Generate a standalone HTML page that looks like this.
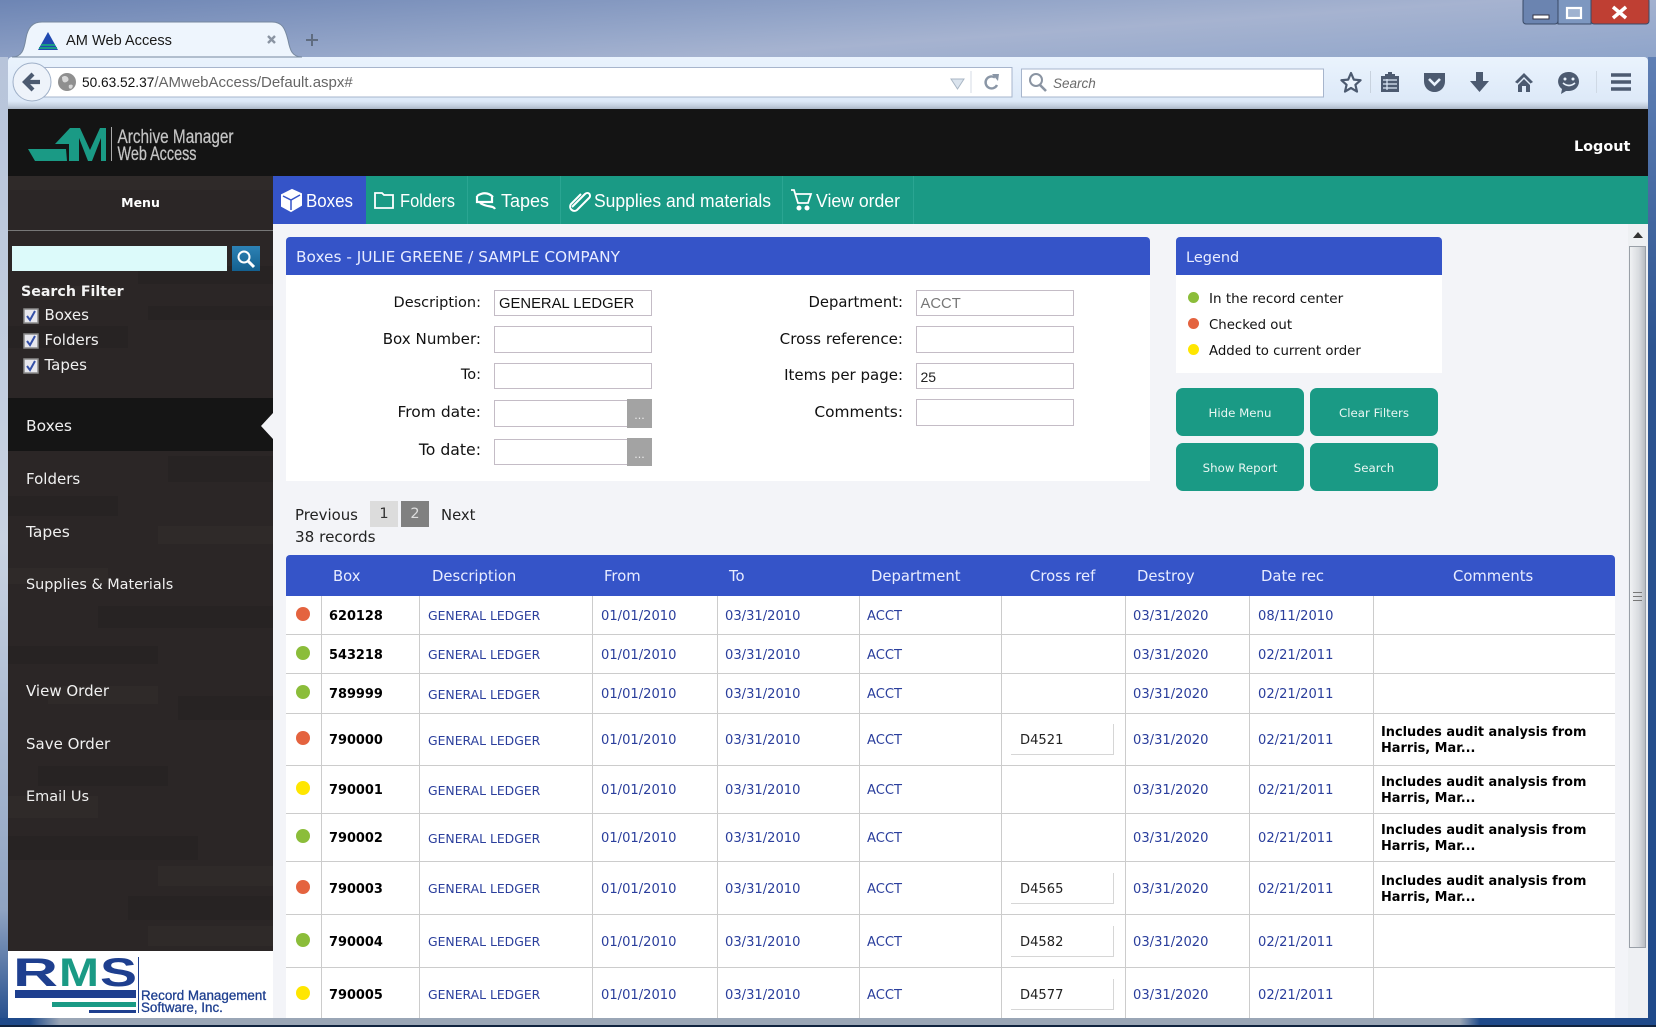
<!DOCTYPE html>
<html><head><meta charset="utf-8"><title>AM Web Access</title>
<style>
html,body{margin:0;padding:0;background:#a9b6d3}
body{width:1656px;height:1027px;overflow:hidden;position:relative;font-family:"DejaVu Sans","Liberation Sans",sans-serif;}
.a{position:absolute}
.t{position:absolute;white-space:nowrap;line-height:20px;height:20px}
.lab{position:absolute;white-space:nowrap;line-height:20px;height:20px;text-align:right;font-size:15.100px;color:#111}
.in{position:absolute;background:#fff;border:1px solid #c4bcc6;box-sizing:border-box;width:158px}
.inv{font-family:"Liberation Sans",sans-serif;font-size:14.800px;position:absolute;white-space:nowrap;line-height:20px}
.dots{position:absolute;background:#a3a3a3;color:#eee;width:25px;text-align:center;font-size:11px;line-height:34px;height:29px}
.sb{color:#f0f0f0;font-size:15px}
.btn{position:absolute;background:#1a9a85;border-radius:7px;color:#e8f6f2;font-size:11.800px;text-align:center;width:128px;height:48px;line-height:50px}
.dot{position:absolute;width:14px;height:14px;border-radius:50%}
.r{background:#e4633f}.g{background:#8bbd3a}.y{background:#ffe600}
.h{position:absolute;top:567px;line-height:20px;font-size:14.800px;color:#e8ecff;white-space:nowrap}
table{border-collapse:separate;border-spacing:0;table-layout:fixed;width:1329px;background:#fff}
td{box-sizing:border-box;border-right:1px solid #ccc;border-bottom:1px solid #ccc;padding:2px 0 0 7px;font-size:13.100px;color:#2a3e9c;white-space:nowrap;vertical-align:middle}
td.b{font-weight:bold;color:#000;font-size:12.900px}
td.c{font-weight:bold;color:#000;font-size:12.900px;line-height:16px;border-right:0;padding-top:3px}
td.d{font-size:12.400px;padding:1px 0 0 8px}
td.x{padding:0}
.xr{margin-left:9px;width:103px;height:31px;box-sizing:border-box;border-right:1px solid #d6d6d6;border-bottom:1px solid #d6d6d6;line-height:34px;padding-left:9px;color:#222}
</style></head><body>

<!-- window frame -->
<div class="a" style="left:0;top:0;width:1656px;height:60px;background:linear-gradient(176deg,#6d85b4 0%,#97a8ca 45%,#a6b3d0 60%,#8ea4ca 100%)"></div>
<div class="a" style="left:0;top:57px;width:8px;height:970px;background:linear-gradient(180deg,#b7c4da 0%,#c9d3e2 50%,#8fa3c2 88%,#1f4a8a 100%)"></div>
<div class="a" style="left:1648px;top:57px;width:8px;height:970px;background:linear-gradient(180deg,#5f7fb4 0%,#2d5490 30%,#1f4a8a 100%)"></div>
<div class="a" style="left:0;top:1018px;width:1656px;height:9px;background:linear-gradient(90deg,#1f4a8a 0,#1f4a8a 30px,#9aa6b6 60px,#9aa6b6 1460px,#1f4a8a 1480px)"></div>
<div class="a" style="left:0;top:1025px;width:1656px;height:2px;background:#10233f"></div>

<!-- toolbar -->
<div class="a" style="left:8px;top:57px;width:1640px;height:52px;background:linear-gradient(180deg,#eaf3fd 0%,#dde9f8 85%,#c3cfde 94%,#aab6c6 100%);border-radius:4px 4px 0 0"></div>

<svg class="a" style="left:0;top:0" width="1656" height="109" viewBox="0 0 1656 109">
 <!-- tab -->
 <path d="M12 57C22 57 24 50 26 38C28 27 33 22 42 22H272C282 22 285 28 288 40C290 50 292 57 302 57Z" fill="#eef5fd" stroke="#76889f"/>
 <path d="M38 50L48 32L58 50Z" fill="#1f49b0"/><path d="M41 45H55M39 48H57" stroke="#1a9a85" stroke-width="2"/>
 <text x="66" y="45" font-family="Liberation Sans" font-size="14.600" fill="#1a1a1a">AM Web Access</text>
 <path d="M268 36L275 43M275 36L268 43" stroke="#8a94a2" stroke-width="2.400"/>
 <path d="M312 34V46M306 40H318" stroke="#5f6c80" stroke-width="2"/>
 <!-- url bar -->
 <rect x="40" y="67.500" width="972" height="29.500" fill="#fff" stroke="#a7b5cc"/>
 <circle cx="32" cy="82" r="19" fill="#eef3fa" stroke="#9fb0c8"/>
 <path d="M40 82H27M33 74L25 82L33 90" fill="none" stroke="#4c5a70" stroke-width="4.200"/>
 <circle cx="67" cy="82" r="9" fill="#8f8f8f"/><path d="M62 77C66 74 70 78 68 81C64 84 62 82 62 77M69 85C72 84 74 85 72 88C70 90 68 88 69 85" fill="#d8d8d8"/>
 <text x="82" y="87" font-family="Liberation Sans" font-size="13.700" fill="#111">50.63.52.37<tspan fill="#666" font-size="15">/AMwebAccess/Default.aspx#</tspan></text>
 <path d="M951 79H964L957.500 89Z" fill="#dbe4ee" stroke="#a9b6c4"/>
 <path d="M971 71V93" stroke="#d4dbe4"/>
 <path d="M997 85A6 6 0 1 1 995 77.500" fill="none" stroke="#8a96a6" stroke-width="2.400"/><path d="M992 74L999 74L998 81Z" fill="#8a96a6"/>
 <!-- search -->
 <rect x="1021.500" y="69" width="302" height="28" fill="#fff" stroke="#a7b5cc"/>
 <circle cx="1036" cy="80" r="6" fill="none" stroke="#8a94a2" stroke-width="2"/><path d="M1040 85L1046 91" stroke="#8a94a2" stroke-width="2.600"/>
 <text x="1053" y="88" font-family="Liberation Sans" font-size="13.500" font-style="italic" fill="#6a6a6a">Search</text>
 <!-- star -->
 <path d="M1351 73L1353.800 79.600L1360.600 80.200L1355.400 84.800L1357 91.600L1351 88L1345 91.600L1346.600 84.800L1341.400 80.200L1348.200 79.600Z" fill="#eaf3fd" stroke="#4c5a70" stroke-width="2.200" stroke-linejoin="round"/>
 <path d="M1370.500 71V93" stroke="#c8d2de"/>
 <!-- clipboard -->
 <path d="M1381 76H1385V74H1388V72H1392V74H1395V76H1399V92H1381Z" fill="#4c5a70"/><path d="M1383 80H1397M1383 84H1397M1383 88H1397M1387 79V90" stroke="#dde9f8" stroke-width="1.200"/>
 <!-- pocket -->
 <path d="M1424 73H1445V81C1445 88 1440 92 1434.500 92C1429 92 1424 88 1424 81Z" fill="#4c5a70"/><path d="M1429 79L1434.500 84.500L1440 79" fill="none" stroke="#eaf3fd" stroke-width="2.600"/>
 <!-- download -->
 <path d="M1476 72H1483V81H1489L1479.500 92L1470 81H1476Z" fill="#4c5a70"/>
 <!-- home -->
 <path d="M1515 82L1524 73L1533 82L1530.500 83.500L1524 77L1517.500 83.500Z" fill="#4c5a70"/><path d="M1518 85L1524 79L1530 85V92H1526V86H1522V92H1518Z" fill="#4c5a70"/>
 <!-- smiley -->
 <path d="M1569 72A10 9.500 0 0 1 1569 91H1566L1561 94L1562 89A10 9.500 0 0 1 1569 72Z" fill="#4c5a70"/><circle cx="1565" cy="79" r="1.500" fill="#eaf3fd"/><circle cx="1573" cy="79" r="1.500" fill="#eaf3fd"/><path d="M1563 83Q1569 88 1575 83" fill="none" stroke="#eaf3fd" stroke-width="1.600"/>
 <path d="M1596.500 71V93" stroke="#cfd9e5"/>
 <!-- menu -->
 <path d="M1611 75H1631M1611 82H1631M1611 89H1631" stroke="#4c5a70" stroke-width="3.400"/>
 <!-- window buttons -->
 <rect x="1523" y="-2" width="35" height="26" rx="3" fill="#6b84b0" stroke="#3a4a66"/>
 <rect x="1558" y="-2" width="33" height="26" fill="#7d97c0" stroke="#3a4a66"/>
 <rect x="1591" y="-2" width="58" height="26" rx="3" fill="#bf3f33" stroke="#3a4a66"/>
 <rect x="1533" y="15" width="16" height="4" fill="#fff" stroke="#334"/>
 <rect x="1567" y="8" width="14" height="10" fill="#9fb2d0" stroke="#fff" stroke-width="2.200"/>
 <path d="M1613 7L1626 18M1626 7L1613 18" stroke="#fff" stroke-width="3.500"/>
</svg>

<!-- app header -->
<div class="a" style="left:8px;top:109px;width:1640px;height:67px;background:#141414"></div>
<svg class="a" style="left:8px;top:109px" width="300" height="67" viewBox="8 109 300 67">
 <path d="M28 149H66L67 161H35Z" fill="#1a9a85"/>
 <path d="M55 144L70 128H74V161H69V144Z" fill="#1a9a85"/>
 <path d="M74 161V128H80L90 150L100 128H106V161H101V138L92 161H88L79 138V161Z" fill="#1a9a85"/>
 <path d="M111.500 127V161" stroke="#aaa"/>
 <text x="117.500" y="143" font-family="Liberation Sans" font-size="19" fill="#c4c4c4" stroke="#c4c4c4" stroke-width=".25" textLength="116" lengthAdjust="spacingAndGlyphs">Archive Manager</text>
 <text x="117.500" y="160" font-family="Liberation Sans" font-size="19" fill="#c4c4c4" stroke="#c4c4c4" stroke-width=".25" textLength="79" lengthAdjust="spacingAndGlyphs">Web Access</text>
</svg>
<div class="t" style="left:1574px;top:137px;font-size:14.400px;font-weight:bold;color:#fff">Logout</div>

<!-- main bg -->
<div class="a" style="left:273px;top:224px;width:1375px;height:794px;background:#f3f4f8"></div>

<!-- sidebar -->
<svg class="a" style="left:8px;top:176px" width="265" height="775" viewBox="0 0 265 775">
 <rect width="265" height="775" fill="#2b2626"/>
 <g fill="#272323">
  <rect x="130" y="90" width="135" height="18"/><rect x="0" y="150" width="120" height="22"/><rect x="140" y="130" width="125" height="14"/>
  <rect x="160" y="280" width="105" height="26"/><rect x="0" y="320" width="110" height="20"/><rect x="90" y="430" width="175" height="22"/>
  <rect x="0" y="470" width="150" height="18"/><rect x="170" y="520" width="95" height="24"/><rect x="30" y="590" width="130" height="20"/>
  <rect x="0" y="660" width="190" height="24"/><rect x="120" y="720" width="145" height="24"/>
 </g>
 <g fill="#2f2a29">
  <rect x="0" y="0" width="265" height="14"/><rect x="20" y="110" width="90" height="14"/><rect x="180" y="250" width="85" height="24"/>
  <rect x="0" y="392" width="100" height="16"/><rect x="150" y="350" width="115" height="18"/><rect x="40" y="510" width="110" height="18"/>
  <rect x="0" y="620" width="90" height="22"/><rect x="150" y="690" width="115" height="20"/><rect x="140" y="750" width="125" height="20"/>
 </g>
</svg>
<div class="a" style="left:8px;top:230px;width:265px;height:1px;background:#777"></div>
<div class="t" style="left:8px;width:265px;text-align:center;top:193px;font-size:12.500px;font-weight:bold;color:#fff">Menu</div>
<div class="a" style="left:12px;top:246px;width:215px;height:25px;background:#dcfafa"></div>
<div class="a" style="left:232px;top:246px;width:28px;height:25px;background:linear-gradient(180deg,#2d82b5,#14608f)"></div>
<svg class="a" style="left:232px;top:246px" width="28" height="25"><circle cx="12" cy="11" r="5.500" fill="none" stroke="#fff" stroke-width="2"/><path d="M16 15L22 21" stroke="#fff" stroke-width="3"/></svg>
<div class="t" style="left:21px;top:282px;font-size:14.200px;font-weight:bold;color:#f4f4f4">Search Filter</div>

<svg class="a" style="left:23px;top:308px" width="17" height="66" viewBox="0 0 17 66">
 <g fill="#e8e8ee" stroke="#8c8c8c" stroke-width="1.500"><rect x="1" y="1" width="14" height="14"/><rect x="1" y="26" width="14" height="14"/><rect x="1" y="51" width="14" height="14"/></g>
 <g fill="none" stroke="#3450a8" stroke-width="2"><path d="M4 8L7 12L12 3"/><path d="M4 33L7 37L12 28"/><path d="M4 58L7 62L12 53"/></g>
</svg>
<div class="t sb" style="left:44.500px;top:305px">Boxes</div>
<div class="t sb" style="left:44.500px;top:330px">Folders</div>
<div class="t sb" style="left:44.500px;top:355px">Tapes</div>

<div class="a" style="left:8px;top:398px;width:265px;height:53px;background:#151515"></div>
<svg class="a" style="left:261px;top:413px" width="12" height="26"><path d="M12 0V26L0 13Z" fill="#f3f4f8"/></svg>
<div class="t sb" style="left:26px;top:416px;font-size:15.500px">Boxes</div>
<div class="t sb" style="left:26px;top:469px">Folders</div>
<div class="t sb" style="left:26px;top:522px;font-size:15.500px">Tapes</div>
<div class="t sb" style="left:26px;top:575px;font-size:14.400px">Supplies &amp; Materials</div>
<div class="t sb" style="left:26px;top:681px">View Order</div>
<div class="t sb" style="left:26px;top:734px">Save Order</div>
<div class="t sb" style="left:26px;top:787px;font-size:14.500px">Email Us</div>

<!-- RMS logo -->
<div class="a" style="left:8px;top:951px;width:265px;height:67px;background:#fff"></div>
<svg class="a" style="left:8px;top:951px" width="265" height="67" viewBox="8 951 265 67">
 <text x="13" y="986" font-family="Liberation Sans" font-weight="bold" font-size="40" fill="#1e3f8f" textLength="45" lengthAdjust="spacingAndGlyphs">R</text>
 <text x="59" y="986" font-family="Liberation Sans" font-weight="bold" font-size="40" fill="#1a9a85" textLength="40" lengthAdjust="spacingAndGlyphs">M</text>
 <text x="100" y="986" font-family="Liberation Sans" font-weight="bold" font-size="40" fill="#1e3f8f" textLength="37" lengthAdjust="spacingAndGlyphs">S</text>
 <rect x="15" y="990" width="121" height="8" fill="#1e3f8f"/>
 <rect x="52" y="1002" width="84" height="5" fill="#1a9a85"/>
 <rect x="89" y="1010" width="47" height="3" fill="#1e3f8f"/>
 <path d="M138.500 957V1013" stroke="#1e3f8f"/>
 <text x="141" y="1000" font-family="Liberation Sans" font-size="13.400" fill="#1e3f8f" stroke="#1e3f8f" stroke-width=".3">Record Management</text>
 <text x="141" y="1012" font-family="Liberation Sans" font-size="13.400" fill="#1e3f8f" stroke="#1e3f8f" stroke-width=".3">Software, Inc.</text>
</svg>

<!-- nav -->
<div class="a" style="left:273px;top:176px;width:1375px;height:48px;background:#1a9a85"></div>
<div class="a" style="left:273px;top:176px;width:93px;height:48px;background:#3554c8"></div>
<svg class="a" style="left:273px;top:176px" width="700" height="48" viewBox="273 176 700 48">
 <path d="M467.500 176V224M560.500 176V224M782.500 176V224M913.500 176V224" stroke="#2aa592"/>
 <g font-family="Liberation Sans" font-size="18" fill="#fff">
  <text x="306" y="207" textLength="47" lengthAdjust="spacingAndGlyphs">Boxes</text>
  <text x="400" y="207" textLength="55" lengthAdjust="spacingAndGlyphs">Folders</text>
  <text x="501" y="207" textLength="48" lengthAdjust="spacingAndGlyphs">Tapes</text>
  <text x="594" y="207" textLength="177" lengthAdjust="spacingAndGlyphs">Supplies and materials</text>
  <text x="816" y="207" textLength="84" lengthAdjust="spacingAndGlyphs">View order</text>
 </g>
 <g fill="none" stroke="#fff" stroke-width="2">
  <path d="M282 195L292 190L301 194V205L291 211L282 206Z" fill="#fff"/><path d="M283 196L291 200L300 195M291 200V210" stroke="#3554c8" stroke-width="1.500"/>
  <path d="M375 208V193H382L384 195H393V208Z" stroke-width="1.800"/>
  <path d="M477 196Q486 190 493 197M477 196V202H492V197M480 203C488 208 493 205 495 209" stroke-width="2.200"/>
  <path d="M572 207L585 194C588 191 592 195 589 198L577 210C573 213 568 208 571 204L581 194" stroke-width="2"/>
  <path d="M791 190H794L798 203H808L811 194H795" stroke-width="1.800"/><circle cx="799" cy="208" r="1.500" fill="#fff"/><circle cx="807" cy="208" r="1.500" fill="#fff"/>
 </g>
</svg>

<!-- form panel -->
<div class="a" style="left:286px;top:275px;width:864px;height:206px;background:#fff"></div>
<div class="a" style="left:286px;top:237px;width:864px;height:38px;background:#3554c8;border-radius:4px 4px 0 0"></div>
<div class="t" style="left:296px;top:247px;font-size:15.350px;color:#e8ecff">Boxes - JULIE GREENE / SAMPLE COMPANY</div>

<div class="lab" style="left:300px;width:181px;top:293px;font-size:14.500px">Description:</div>
<div class="lab" style="left:300px;width:181px;top:329px">Box Number:</div>
<div class="lab" style="left:300px;width:181px;top:365px;font-size:14.500px">To:</div>
<div class="lab" style="left:300px;width:181px;top:402px;font-size:15.500px">From date:</div>
<div class="lab" style="left:300px;width:181px;top:440px;font-size:15.700px">To date:</div>
<div class="in" style="left:494px;top:290px;height:26px"></div>
<div class="in" style="left:494px;top:326px;height:27px"></div>
<div class="in" style="left:494px;top:363px;height:26px"></div>
<div class="in" style="left:494px;top:400px;height:27px"></div>
<div class="in" style="left:494px;top:439px;height:26px"></div>
<div class="dots" style="left:627px;top:399px">...</div>
<div class="dots" style="left:627px;top:438px;height:28px">...</div>
<div class="inv" style="left:499px;top:294px;color:#111">GENERAL LEDGER</div>

<div class="lab" style="left:750px;width:153px;top:293px;font-size:14.800px">Department:</div>
<div class="lab" style="left:750px;width:153px;top:328.500px">Cross reference:</div>
<div class="lab" style="left:750px;width:153px;top:365px;font-size:15px">Items per page:</div>
<div class="lab" style="left:750px;width:153px;top:402px;font-size:15.400px">Comments:</div>
<div class="in" style="left:916px;top:290px;height:26px"></div>
<div class="in" style="left:916px;top:326px;height:27px"></div>
<div class="in" style="left:916px;top:363px;height:26px"></div>
<div class="in" style="left:916px;top:399px;height:27px"></div>
<div class="inv" style="left:920.500px;top:294px;color:#777">ACCT</div>
<div class="inv" style="left:920.500px;top:367px;color:#222;font-size:14px">25</div>

<!-- legend -->
<div class="a" style="left:1176px;top:275px;width:266px;height:98px;background:#fff"></div>
<div class="a" style="left:1176px;top:237px;width:266px;height:38px;background:#3554c8;border-radius:4px 4px 0 0"></div>
<div class="t" style="left:1186px;top:247.500px;font-size:14.500px;color:#e8ecff">Legend</div>
<div class="dot g" style="left:1188px;top:292px;width:11px;height:11px"></div>
<div class="dot r" style="left:1188px;top:318px;width:11px;height:11px"></div>
<div class="dot y" style="left:1188px;top:344px;width:11px;height:11px"></div>
<div class="t" style="left:1209px;top:289px;font-size:13.500px;color:#111">In the record center</div>
<div class="t" style="left:1209px;top:315.500px;font-size:13.300px;color:#111">Checked out</div>
<div class="t" style="left:1209px;top:341.500px;font-size:13.300px;color:#111">Added to current order</div>

<div class="btn" style="left:1176px;top:388px">Hide Menu</div>
<div class="btn" style="left:1310px;top:388px">Clear Filters</div>
<div class="btn" style="left:1176px;top:443px">Show Report</div>
<div class="btn" style="left:1310px;top:443px">Search</div>

<!-- pagination -->
<div class="t" style="left:295px;top:505px;font-size:14.900px;color:#222">Previous</div>
<div class="t" style="left:370px;top:501px;width:28px;height:26px;line-height:27px;text-align:center;background:#dcdcdc;font-size:14.500px;color:#333">1</div>
<div class="t" style="left:401px;top:501px;width:28px;height:26px;line-height:27px;text-align:center;background:#808080;font-size:14.500px;color:#ddd">2</div>
<div class="t" style="left:441px;top:505.500px;font-size:14.800px;color:#222">Next</div>
<div class="t" style="left:295px;top:527px;font-size:15.200px;color:#222">38 records</div>

<!-- results table -->
<div class="a" style="left:286px;top:555px;width:1329px;height:41px;background:#3554c8;border-radius:4px 4px 0 0"></div>
<div class="h" style="left:333px">Box</div>
<div class="h" style="left:432px">Description</div>
<div class="h" style="left:604px">From</div>
<div class="h" style="left:729px">To</div>
<div class="h" style="left:871px">Department</div>
<div class="h" style="left:1030px">Cross ref</div>
<div class="h" style="left:1137px">Destroy</div>
<div class="h" style="left:1261px">Date rec</div>
<div class="h" style="left:1453px">Comments</div>

<div class="a" style="left:286px;top:596px;width:1329px;height:422px;overflow:hidden">
<table>
<colgroup><col style="width:36px"><col style="width:98px"><col style="width:173px"><col style="width:125px"><col style="width:142px"><col style="width:142px"><col style="width:124px"><col style="width:124px"><col style="width:124px"><col style="width:241px"></colgroup>
<tr style="height:39px"><td></td><td class="b">620128</td><td class="d">GENERAL LEDGER</td><td style="padding-left:8px">01/01/2010</td><td>03/31/2010</td><td>ACCT</td><td class="x"></td><td>03/31/2020</td><td style="padding-left:8px">08/11/2010</td><td class="c"></td></tr>
<tr style="height:39px"><td></td><td class="b">543218</td><td class="d">GENERAL LEDGER</td><td style="padding-left:8px">01/01/2010</td><td>03/31/2010</td><td>ACCT</td><td class="x"></td><td>03/31/2020</td><td style="padding-left:8px">02/21/2011</td><td class="c"></td></tr>
<tr style="height:40px"><td></td><td class="b">789999</td><td class="d">GENERAL LEDGER</td><td style="padding-left:8px">01/01/2010</td><td>03/31/2010</td><td>ACCT</td><td class="x"></td><td>03/31/2020</td><td style="padding-left:8px">02/21/2011</td><td class="c"></td></tr>
<tr style="height:52px"><td></td><td class="b">790000</td><td class="d">GENERAL LEDGER</td><td style="padding-left:8px">01/01/2010</td><td>03/31/2010</td><td>ACCT</td><td class="x"><div class="xr">D4521</div></td><td>03/31/2020</td><td style="padding-left:8px">02/21/2011</td><td class="c">Includes audit analysis from<br>Harris, Mar...</td></tr>
<tr style="height:48px"><td></td><td class="b">790001</td><td class="d">GENERAL LEDGER</td><td style="padding-left:8px">01/01/2010</td><td>03/31/2010</td><td>ACCT</td><td class="x"></td><td>03/31/2020</td><td style="padding-left:8px">02/21/2011</td><td class="c">Includes audit analysis from<br>Harris, Mar...</td></tr>
<tr style="height:48px"><td></td><td class="b">790002</td><td class="d">GENERAL LEDGER</td><td style="padding-left:8px">01/01/2010</td><td>03/31/2010</td><td>ACCT</td><td class="x"></td><td>03/31/2020</td><td style="padding-left:8px">02/21/2011</td><td class="c">Includes audit analysis from<br>Harris, Mar...</td></tr>
<tr style="height:53px"><td></td><td class="b">790003</td><td class="d">GENERAL LEDGER</td><td style="padding-left:8px">01/01/2010</td><td>03/31/2010</td><td>ACCT</td><td class="x"><div class="xr">D4565</div></td><td>03/31/2020</td><td style="padding-left:8px">02/21/2011</td><td class="c">Includes audit analysis from<br>Harris, Mar...</td></tr>
<tr style="height:53px"><td></td><td class="b">790004</td><td class="d">GENERAL LEDGER</td><td style="padding-left:8px">01/01/2010</td><td>03/31/2010</td><td>ACCT</td><td class="x"><div class="xr">D4582</div></td><td>03/31/2020</td><td style="padding-left:8px">02/21/2011</td><td class="c"></td></tr>
<tr style="height:53px"><td></td><td class="b">790005</td><td class="d">GENERAL LEDGER</td><td style="padding-left:8px">01/01/2010</td><td>03/31/2010</td><td>ACCT</td><td class="x"><div class="xr">D4577</div></td><td>03/31/2020</td><td style="padding-left:8px">02/21/2011</td><td class="c"></td></tr>
</table>
</div>
<div class="dot r" style="left:296px;top:607px"></div>
<div class="dot g" style="left:296px;top:646px"></div>
<div class="dot g" style="left:296px;top:685px"></div>
<div class="dot r" style="left:296px;top:731px"></div>
<div class="dot y" style="left:296px;top:781px"></div>
<div class="dot g" style="left:296px;top:829px"></div>
<div class="dot r" style="left:296px;top:880px"></div>
<div class="dot g" style="left:296px;top:933px"></div>
<div class="dot y" style="left:296px;top:986px"></div>

<!-- scrollbar -->
<div class="a" style="left:1628px;top:224px;width:20px;height:794px;background:#eef0f3"></div>
<svg class="a" style="left:1628px;top:224px" width="20" height="20" viewBox="1628 224 20 20">
 <path d="M1633 238L1638 232L1643 238Z" fill="#333"/>
</svg>
<div class="a" style="left:1629px;top:246px;width:17px;height:702px;background:linear-gradient(90deg,#f0f1f3,#d8dbdf 60%,#b8bcc2);border:1px solid #9aa0a8;box-sizing:border-box"></div>
<div class="a" style="left:1633px;top:592px;width:9px;height:9px;border-top:1px solid #777;border-bottom:1px solid #777;box-sizing:border-box"></div>
<div class="a" style="left:1633px;top:596px;width:9px;height:1px;background:#777"></div>
</body></html>
